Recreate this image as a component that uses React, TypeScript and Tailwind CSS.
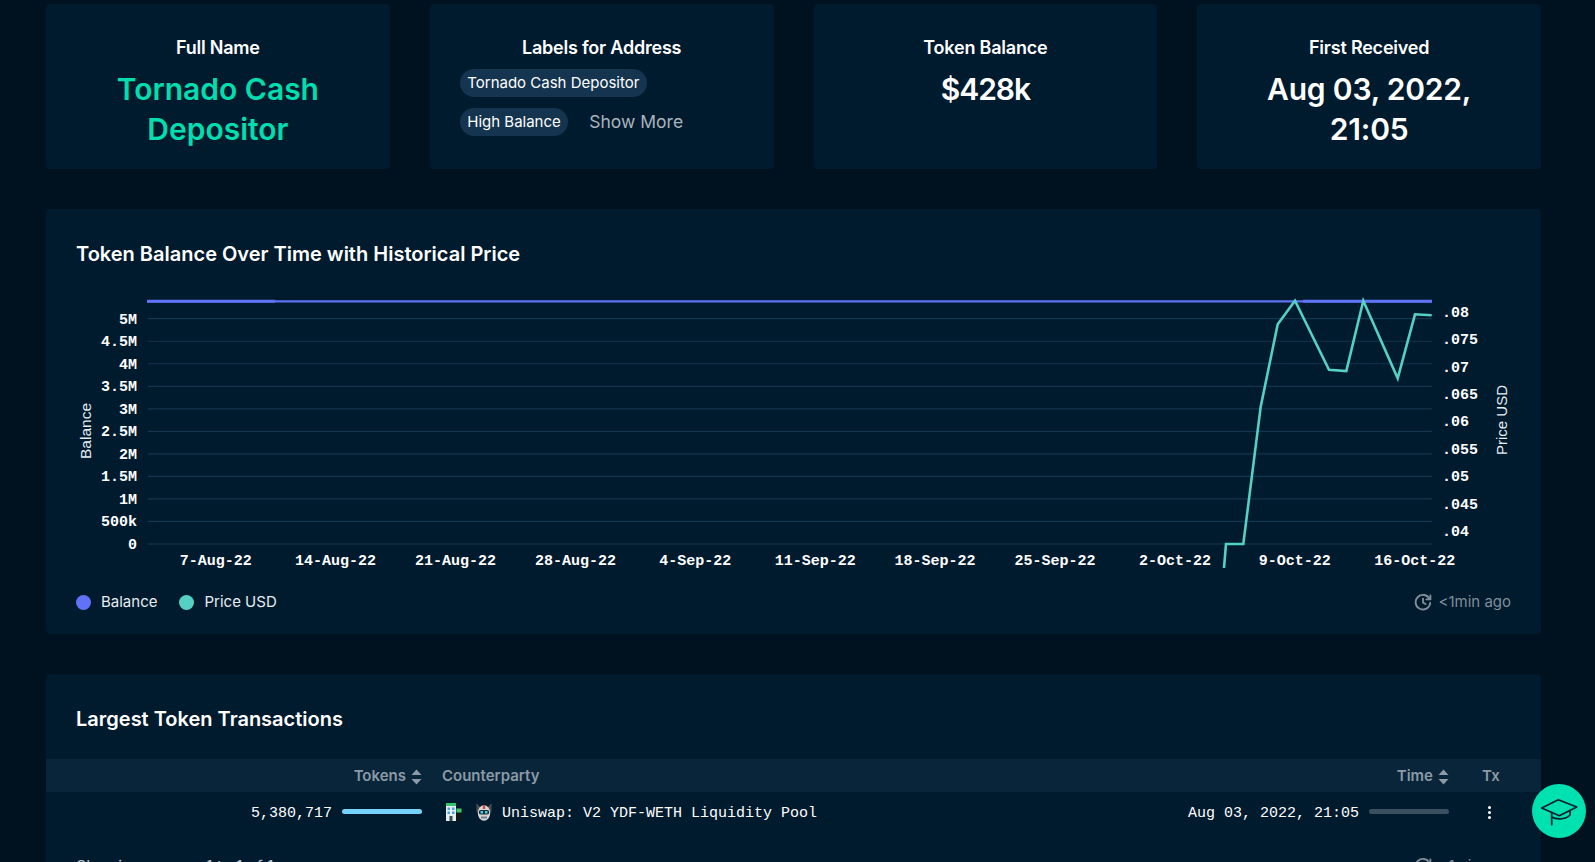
import React from 'react'

const balanceTicks = ['5M', '4.5M', '4M', '3.5M', '3M', '2.5M', '2M', '1.5M', '1M', '500k', '0']
const priceTicks = ['.08', '.075', '.07', '.065', '.06', '.055', '.05', '.045', '.04']
const dateTicks = ['7-Aug-22', '14-Aug-22', '21-Aug-22', '28-Aug-22', '4-Sep-22', '11-Sep-22', '18-Sep-22', '25-Sep-22', '2-Oct-22', '9-Oct-22', '16-Oct-22']

const pricePoints = '1224,568 1226,544 1243.3,544 1260.7,406.7 1277.7,324.3 1295,300.7 1329,369.7 1346.3,371 1363.3,300.7 1397.7,378.3 1415,314.3 1431.7,315.3'

const SortIcon = () => (
  <svg width="11" height="16" viewBox="0 0 11 16" className="ml-[5px] shrink-0">
    <path d="M5.5 0.5 L10.5 6 H0.5 Z" fill="#8b9aa6" />
    <path d="M5.5 15.5 L10.5 10 H0.5 Z" fill="#8b9aa6" />
  </svg>
)

const ClockIcon = () => (
  <svg width="18" height="18" viewBox="0 0 18 18" fill="none" stroke="#7f8e9a" strokeWidth="1.9" strokeLinecap="round" strokeLinejoin="round">
    <path d="M15.6 6.2 A7.3 7.3 0 1 0 16.2 10" />
    <path d="M16.4 2.4 V6.4 H12.4" />
    <path d="M9 5.6 V9.6 L11.6 11" />
  </svg>
)

const BuildingIcon = () => (
  <svg width="17" height="18" viewBox="0 0 17 18" className="shrink-0">
    <rect x="1" y="0" width="10" height="18" fill="#e6eef2" />
    <rect x="1" y="0" width="10" height="3" fill="#33c46c" />
    <rect x="2.5" y="4.5" width="2.5" height="2.5" fill="#4aa3d8" />
    <rect x="7" y="4.5" width="2.5" height="2.5" fill="#4aa3d8" />
    <rect x="2.5" y="8.5" width="2.5" height="2.5" fill="#4aa3d8" />
    <rect x="7" y="8.5" width="2.5" height="2.5" fill="#4aa3d8" />
    <rect x="4.5" y="13" width="3" height="5" fill="#3a4a52" />
    <rect x="11" y="5" width="6" height="13" fill="#10181c" />
    <rect x="11.5" y="5.5" width="5" height="4" fill="#3cc76f" />
  </svg>
)

const RobotIcon = () => (
  <svg width="16" height="18" viewBox="0 0 16 18" className="shrink-0">
    <path d="M0.5 0 L4 4 H12 L15.5 0 V9 L13 11 H3 L0.5 9 Z" fill="#4a4e53" />
    <ellipse cx="8" cy="10" rx="6.2" ry="7.8" fill="#d5d6d8" />
    <rect x="6.8" y="2.2" width="2.4" height="3.8" fill="#d9483b" />
    <rect x="2.8" y="7" width="10.4" height="4.5" rx="2" fill="#1d2a33" />
    <rect x="4.5" y="8" width="2.5" height="2.5" fill="#3fd0e6" />
    <rect x="9" y="8" width="2.5" height="2.5" fill="#3fd0e6" />
    <rect x="5" y="13.5" width="6" height="2" fill="#7d8186" />
  </svg>
)

const Card: React.FC<{ title: string; children: React.ReactNode }> = ({ title, children }) => (
  <div className="h-[165px] rounded-[4px] bg-[#001a2e] pt-8 text-center">
    <p className="text-[18px] font-semibold leading-6 tracking-[-0.22px] text-white">{title}</p>
    {children}
  </div>
)

export default function App() {
  return (
    <div className="relative h-screen overflow-hidden bg-[#00121f] pl-[46px] pr-[54px] pt-1 text-white [font-family:Inter,sans-serif]">
      <div className="grid grid-cols-4 gap-10">
        <Card title="Full Name">
          <p className="mt-[9px] px-6 text-[30px] font-semibold leading-10 text-[#00deaf]">Tornado Cash Depositor</p>
        </Card>
        <Card title="Labels for Address">
          <div className="mt-[9px] flex flex-col gap-[11px] px-[30px] text-left">
            <div className="flex">
              <span className="h-7 rounded-full bg-[#14344f] px-[7.5px] text-[15px] leading-7">Tornado Cash Depositor</span>
            </div>
            <div className="flex items-center gap-[21px]">
              <span className="h-7 rounded-full bg-[#14344f] px-[7.5px] text-[15px] leading-7">High Balance</span>
              <span className="text-[17.5px] leading-7 text-[#a9b4bd]">Show More</span>
            </div>
          </div>
        </Card>
        <Card title="Token Balance">
          <p className="mt-[9px] text-[30px] font-semibold leading-10 tracking-[-1px]">$428k</p>
        </Card>
        <Card title="First Received">
          <p className="mt-[9px] px-10 text-[30px] font-semibold leading-10 tracking-[-0.2px]">Aug 03, 2022, 21:05</p>
        </Card>
      </div>

      <div className="mt-10 h-[425px] rounded-[4px] bg-[#001a2e] px-[30px] pt-[33px]">
        <h2 className="text-[20px] font-semibold leading-6">Token Balance Over Time with Historical Price</h2>
        <svg width="1435" height="290" viewBox="76 292 1435 290" className="mt-[26px] block">
          {balanceTicks.map((t, i) => {
            const y = 318.7 + i * 22.53
            return (
              <g key={t}>
                <line x1="148" x2="1432" y1={y} y2={y} stroke="#14364f" strokeWidth="1.2" />
                <text x="137" y={y + 4.8} textAnchor="end" fill="#fff" fontSize="15" fontWeight="700" fontFamily="Liberation Mono">{t}</text>
              </g>
            )
          })}
          {priceTicks.map((t, i) => (
            <text key={t} x="1442" y={311.7 + i * 27.4 + 5} fill="#fff" fontSize="15" fontWeight="700" fontFamily="Liberation Mono">{t}</text>
          ))}
          {dateTicks.map((t, i) => (
            <text key={t} x={215.7 + i * 119.9} y="565" textAnchor="middle" fill="#fff" fontSize="15" fontWeight="700" fontFamily="Liberation Mono">{t}</text>
          ))}
          <text transform="translate(91 431) rotate(-90)" textAnchor="middle" fill="#e6edf2" fontSize="15.5" fontFamily="Liberation Sans">Balance</text>
          <text transform="translate(1507 420) rotate(-90)" textAnchor="middle" fill="#e6edf2" fontSize="15" fontFamily="Liberation Sans">Price USD</text>
          <line x1="147" x2="1432" y1="301.3" y2="301.3" stroke="#5f72f5" strokeWidth="2.2" />
          <line x1="147" x2="275" y1="301.3" y2="301.3" stroke="#6073f6" strokeWidth="3" />
          <line x1="1303" x2="1432" y1="301.3" y2="301.3" stroke="#6073f6" strokeWidth="3" />
          <polyline points={pricePoints} fill="none" stroke="#55d1c4" strokeWidth="2.6" />
        </svg>
        <div className="mt-[10px] flex h-5 items-center text-[15px] leading-5 text-[#e6edf2]">
          <span className="h-[15px] w-[15px] rounded-full bg-[#6073f6]" />
          <span className="ml-[10px]">Balance</span>
          <span className="ml-[22px] h-[15px] w-[15px] rounded-full bg-[#55d1c4]" />
          <span className="ml-[10px]">Price USD</span>
          <span className="ml-auto flex items-center gap-[7px] text-[#7f8e9a]">
            <ClockIcon />
            &lt;1min ago
          </span>
        </div>
      </div>

      <div className="mt-10 h-[400px] rounded-[4px] bg-[#001a2e] pt-[33px]">
        <h2 className="px-[30px] text-[20px] font-semibold leading-6">Largest Token Transactions</h2>
        <div className="mt-7 grid h-[33px] grid-cols-[396px_1fr_299px_72px] items-center bg-[#092539] pt-[2px] text-[15px] font-semibold text-[#8b9aa6]">
          <div className="flex items-center justify-end pr-5">Tokens<SortIcon /></div>
          <div>Counterparty</div>
          <div className="flex items-center justify-end pr-5">Time<SortIcon /></div>
          <div className="pl-[13px]">Tx</div>
        </div>
        <div className="grid h-10 grid-cols-[396px_1fr_299px_72px] items-center text-[15px] [font-family:'Liberation_Mono',monospace]">
          <div className="flex items-center justify-end pr-5">
            <span className="pt-1">5,380,717</span>
            <span className="mb-[2px] ml-[10px] h-[5px] w-20 rounded-full bg-[#74d2fb]" />
          </div>
          <div className="flex items-center pl-[3px]">
            <BuildingIcon />
            <span className="ml-[14px]"><RobotIcon /></span>
            <span className="ml-[10px] pt-1">Uniswap: V2 YDF-WETH Liquidity Pool</span>
          </div>
          <div className="flex items-center justify-end pr-5">
            <span className="pt-1">Aug 03, 2022, 21:05</span>
            <span className="mb-[2px] ml-[10px] h-[5px] w-20 rounded-full bg-[#3a5060]" />
          </div>
          <div className="flex flex-col gap-[2px] pl-[19px]">
            <span className="h-[3px] w-[3px] rounded-full bg-white" />
            <span className="h-[3px] w-[3px] rounded-full bg-white" />
            <span className="h-[3px] w-[3px] rounded-full bg-white" />
          </div>
        </div>
        <div className="mt-6 flex items-center justify-between px-[30px] text-[16px] leading-5 text-[#b8c3cb]">
          <span>Showing<span className="mx-[14px]">rows</span>1 to 1 of 1</span>
          <span className="flex items-center gap-[7px] text-[15px] text-[#7f8e9a]"><ClockIcon />&lt;1min ago</span>
        </div>
      </div>

      <div className="absolute left-[1532px] top-[784px] flex h-[54px] w-[54px] items-center justify-center rounded-full bg-[#00e1b0]">
        <svg width="54" height="54" viewBox="0 0 54 54" fill="none" stroke="#05202c" strokeWidth="1.7" strokeLinecap="round" strokeLinejoin="round">
          <path d="M9.7 24 L26.3 15.7 L44.7 23 L27.3 31.7 Z" />
          <path d="M19.7 28.3 V40.7" />
          <path d="M19.7 33 C24 35.5 33 36 38 31 V27" />
        </svg>
      </div>
    </div>
  )
}
